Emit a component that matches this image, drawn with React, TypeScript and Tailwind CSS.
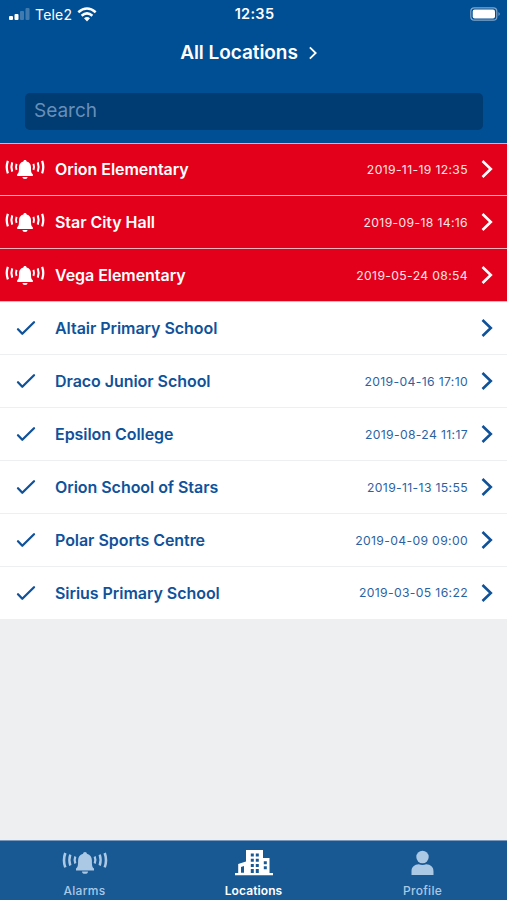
import { clsx } from 'clsx';

type Location = { name: string; date?: string; alarm?: boolean };

const locations: Location[] = [
  { name: 'Orion Elementary', date: '2019-11-19 12:35', alarm: true },
  { name: 'Star City Hall', date: '2019-09-18 14:16', alarm: true },
  { name: 'Vega Elementary', date: '2019-05-24 08:54', alarm: true },
  { name: 'Altair Primary School' },
  { name: 'Draco Junior School', date: '2019-04-16 17:10' },
  { name: 'Epsilon College', date: '2019-08-24 11:17' },
  { name: 'Orion School of Stars', date: '2019-11-13 15:55' },
  { name: 'Polar Sports Centre', date: '2019-04-09 09:00' },
  { name: 'Sirius Primary School', date: '2019-03-05 16:22' },
];

const AlarmIcon = ({ className }: { className?: string }) => (
  <svg viewBox="0 0 46 24" className={className} fill="none" stroke="currentColor">
    <path
      d="M23 1c1.100 0 1.900.7 1.900 1.800 3.500.9 5 3.400 5 6.700 0 5 .3 7 2.100 8v2H14v-2c1.800-1 2.100-3 2.100-8 0-3.300 1.500-5.800 5-6.700C21.100 1.700 21.900 1 23 1ZM20 20.500h6a3 2.300 0 0 1-6 0Z"
      fill="currentColor"
      stroke="none"
    />
    <path d="M13.300 5.500q-1.300 3.500 0 7M32.700 5.500q1.300 3.500 0 7" strokeWidth="2.200" />
    <path d="M8.300 3.700q-1.900 5.400 0 10.800M37.700 3.700q1.900 5.400 0 10.800" strokeWidth="2.400" />
    <path d="M3.300 2q-2.600 7.200 0 14.400M42.700 2q2.600 7.200 0 14.400" strokeWidth="2.600" />
  </svg>
);

const CheckIcon = () => (
  <svg viewBox="0 0 20 16" className="h-4 w-5" fill="none" stroke="currentColor" strokeWidth="2.300" strokeLinecap="round" strokeLinejoin="round">
    <path d="m2 9.300 4.300 4.400L18 2.300" />
  </svg>
);

const Chevron = ({ className }: { className?: string }) => (
  <svg viewBox="0 0 12 20" className={className} fill="none" stroke="currentColor" strokeWidth="2.600">
    <path d="m1.500 2 8.300 8-8.300 8" />
  </svg>
);

const BuildingIcon = () => (
  <svg viewBox="0 0 40 28" className="h-7 w-10" fill="currentColor" fillRule="evenodd">
    <path d="M12 1h17v8h6.500v15H39v2.300H1V24h3.200V15l7.800-2.500ZM16.800 4.500v3h3v-3Zm5 0v3h3v-3Zm-5 5.200v3h3v-3Zm5 0v3h3v-3Zm-5 5.200v3h3v-3Zm5 0v3h3v-3Zm-5 5.200V24h3v-3.900Zm5 0V24h3v-3.900ZM29.800 12.200v3h3v-3Zm0 5v3h3v-3ZM7 18v5.700h3V17Z" />
  </svg>
);

const ProfileIcon = () => (
  <svg viewBox="0 0 24 26" className="h-[26px] w-6" fill="currentColor">
    <ellipse cx="11.500" cy="7" rx="6.200" ry="6.300" />
    <path d="M.5 25v-3.500c0-4.700 3-7 7.300-7.200q3.700 1.400 7.400 0c4.300.2 7.300 2.500 7.300 7.200V25Z" />
  </svg>
);

const StatusBar = () => (
  <div className="grid h-7 grid-cols-3 items-center pl-2 pr-[6px]">
    <div className="flex items-center">
      <svg viewBox="0 0 22 12" className="h-3 w-[22px]" fill="currentColor">
        <rect x="1" y="8" width="4" height="4" rx="1" />
        <rect x="6.500" y="6" width="4" height="6" rx="1" />
        <rect x="12" y="3" width="4" height="9" rx="1" opacity=".25" />
        <rect x="17.500" y="0" width="4" height="12" rx="1" opacity=".25" />
      </svg>
      <span className="ml-[5px] text-[14px] tracking-[0.2px]">Tele2</span>
      <svg viewBox="0 0 20 15" className="ml-[5px] h-[15px] w-5" fill="none" stroke="currentColor" strokeWidth="2.500">
        <path d="M1.300 5.300q8.700-7.500 17.400 0M4.600 8.800q5.400-4.800 10.800 0" />
        <path d="M7 11.300q3-2.500 6 0l-3 3.100Z" fill="currentColor" stroke="none" />
      </svg>
    </div>
    <span className="text-center text-[14.500px] font-semibold tracking-[0.300px]">12:35</span>
    <svg viewBox="0 0 31 14" className="h-[14px] w-[31px] justify-self-end" fill="none">
      <rect x=".8" y=".8" width="26" height="12.400" rx="3.500" stroke="currentColor" strokeWidth="1.200" opacity=".5" />
      <rect x="2.700" y="2.500" width="22.300" height="9" rx="2" fill="currentColor" />
      <path d="M28.500 5q2.500 2 0 4Z" fill="currentColor" opacity=".5" />
    </svg>
  </div>
);

const LocationRow = ({ name, date, alarm }: Location) => (
  <li
    className={clsx(
      'flex h-[52.9px] items-center border-b pr-[14px]',
      alarm ? 'border-[#f3b4bb] bg-[#e3001b] text-white' : 'border-[#eeeff1] bg-white text-[#10529a]',
    )}
  >
    <div className="flex w-[55px] shrink-0 items-center pl-[5px]">
      {alarm ? <AlarmIcon className="mt-px h-[21px] w-10" /> : <div className="pl-[11px]"><CheckIcon /></div>}
    </div>
    <span className="grow text-[16px] font-semibold tracking-[-0.050px]">{name}</span>
    {date && <span className="pt-[2px] text-[12.200px] tracking-[0.350px] opacity-90">{date}</span>}
    <Chevron className="ml-[13px] h-5 w-3" />
  </li>
);

export default function App() {
  return (
    <div className="flex h-[900px] w-full flex-col bg-[#eeeff1] font-['Inter','Liberation_Sans',sans-serif] text-white">
      <header className="h-[143.500px] shrink-0 border-b border-[#b5bfdb] bg-[#004e94]">
        <StatusBar />
        <h1 className="flex h-[50px] items-center justify-center pr-[9px] text-[19px] font-semibold tracking-[-0.050px]">
          All Locations
          <Chevron className="ml-[10px] h-[14px] w-[10px]" />
        </h1>
        <div className="mx-[25px] mr-6 mt-[15px] flex h-[37px] items-center rounded-[5px] bg-[#003b71] px-[9px] text-[19px] text-[#688fb8]">
          Search
        </div>
      </header>

      <ul>
        {locations.map((l) => (
          <LocationRow key={l.name} {...l} />
        ))}
      </ul>

      <nav className="mt-auto grid h-[60px] grid-cols-3 border-t border-[#7899bc] bg-[#185994] text-[12px] font-medium text-[#abc8e5]">
        <div className="flex flex-col items-center">
          <div className="flex h-[41px] items-center pt-[3px]"><AlarmIcon className="h-6 w-[46px]" /></div>
          <span className="tracking-[0.300px]">Alarms</span>
        </div>
        <div className="flex flex-col items-center font-semibold text-white">
          <div className="flex h-[41px] items-center pt-[3px]"><BuildingIcon /></div>
          <span className="tracking-[0.100px]">Locations</span>
        </div>
        <div className="flex flex-col items-center">
          <div className="flex h-[41px] items-center pt-[3px]"><ProfileIcon /></div>
          <span className="tracking-[0.300px]">Profile</span>
        </div>
      </nav>
    </div>
  );
}
